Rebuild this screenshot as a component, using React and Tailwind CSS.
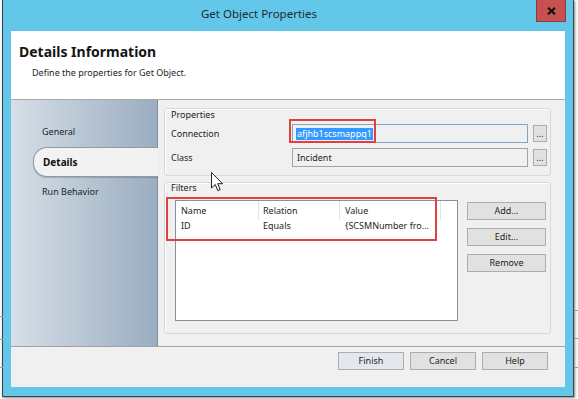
import React from 'react';

const Btn = ({ children, className = '' }) => (
  <div
    className={`flex h-[18px] items-center justify-center border border-[#adadad] bg-[#e1e1e1] text-[9px] text-[#1e1e1e] ${className}`}
  >
    {children}
  </div>
);

const Ellipsis = () => (
  <div className="ml-[5px] flex h-[17px] w-[14px] items-center justify-center border border-[#adadad] bg-[#e1e1e1] text-[9px] leading-none text-[#333]">
    ...
  </div>
);

const Cursor = () => (
  <svg className="absolute left-[211px] top-[172px]" width="13" height="20" viewBox="0 0 13 20">
    <path
      d="M0.5 0.5 L0.5 16 L4.2 12.5 L6.8 18.6 L9.2 17.6 L6.7 11.7 L11.6 11.7 Z"
      fill="#fff"
      stroke="#222"
      strokeWidth="1"
      strokeLinejoin="round"
    />
  </svg>
);

const menu = [
  { label: 'General' },
  { label: 'Details', active: true },
  { label: 'Run Behavior' },
];

export default function App() {
  return (
    <div className="relative h-[399px] w-[578px] overflow-hidden bg-[#f9f9f9] pl-[2px] font-['Noto_Sans',sans-serif] text-[#1e1e1e]">
      {/* bits of the desktop behind the dialog */}
      <div className="absolute left-0 top-[316px] h-px w-[3px] bg-[#9a9a9a]" />
      <div className="absolute left-0 top-[339px] h-px w-[3px] bg-[#9a9a9a]" />
      <div className="absolute left-0 top-[367px] h-px w-[3px] bg-[#9a9a9a]" />
      <div className="absolute right-0 top-[310px] h-px w-[4px] bg-[#9a9a9a]" />
      <div className="absolute right-0 top-[338px] h-px w-[4px] bg-[#9a9a9a]" />
      <div className="absolute right-0 top-[367px] h-px w-[4px] bg-[#9a9a9a]" />

      {/* dialog window */}
      <div className="flex h-[397px] w-[572px] flex-col border-x border-b border-[#3a4348] bg-[#63c7e9] shadow-[1px_1px_2px_rgba(0,0,0,0.45)]">
        {/* title bar */}
        <div className="flex h-[31px] shrink-0">
          <div className="w-[512px] pt-[6px] text-center text-[11.5px] leading-[16px] text-[#1b2b33]">
            Get Object Properties
          </div>
          <div className="ml-[21px] flex h-[22px] w-[30px] items-center justify-center border-x border-b border-[#8d3b3b] bg-[#c75050]">
            <svg width="9" height="8" viewBox="0 0 9 8">
              <path d="M1 0.8 L8 7.2 M8 0.8 L1 7.2" stroke="#111" strokeWidth="2.2" />
            </svg>
          </div>
        </div>

        {/* client area */}
        <div className="mx-[8px] flex h-[356px] flex-col">
          {/* header */}
          <div className="h-[69px] shrink-0 border-b border-[#a9a9a9] bg-white pl-[8px] pt-[12px]">
            <div className="text-[14px] font-bold leading-[18px] text-[#151515]">Details Information</div>
            <div className="pl-[13px] pt-[6px] text-[9px] leading-[12px]">Define the properties for Get Object.</div>
          </div>

          {/* main */}
          <div className="flex h-[246px] shrink-0">
            {/* sidebar */}
            <div className="w-[147px] shrink-0 border-r border-[#7f8d9b] bg-gradient-to-r from-[#d6dfe7] to-[#9badc1] pt-[17px]">
              {menu.map((item) =>
                item.active ? (
                  <div
                    key={item.label}
                    className="relative z-10 -mr-px ml-[22px] flex h-[30px] items-center rounded-l-[14px] border border-r-0 border-[#8f9aa5] bg-[#f2f2f2] pl-[9px] text-[10px] font-bold text-[#111] shadow-[0_1px_1px_rgba(0,0,0,0.18)]"
                  >
                    {item.label}
                  </div>
                ) : (
                  <div key={item.label} className="flex h-[30px] items-center pl-[31px] text-[9px] text-[#222]">
                    {item.label}
                  </div>
                )
              )}
            </div>

            {/* content */}
            <div className="flex flex-1 flex-col bg-[#f0f0f0] pl-[6px] pr-[14px] pt-[8px]">
              {/* Properties group */}
              <div className="rounded-[3px] border border-[#d3d9de] pb-[8px] pl-[6px] shadow-[inset_1px_1px_0_#fff]">
                <div className="text-[9px] leading-[12px]">Properties</div>
                <div className="mt-[3px] flex h-[19px] items-center">
                  <div className="w-[121px] text-[9px]">Connection</div>
                  <div className="flex h-[19px] w-[236px] items-center border border-[#86a3bf] bg-[#f0f0f0] pl-[3px]">
                    <span className="bg-[#3399ff] px-px text-[9px] leading-[12px] text-white">afjhb1scsmappq1</span>
                  </div>
                  <Ellipsis />
                </div>
                <div className="mt-[5px] flex h-[19px] items-center">
                  <div className="w-[121px] text-[9px]">Class</div>
                  <div className="flex h-[19px] w-[236px] items-center border border-[#a3a3a3] bg-[#f0f0f0] pl-[4px] text-[9px]">
                    Incident
                  </div>
                  <Ellipsis />
                </div>
              </div>

              {/* Filters group */}
              <div className="mt-[6px] h-[152px] rounded-[3px] border border-[#d3d9de] shadow-[inset_1px_1px_0_#fff]">
                <div className="pl-[6px] text-[9px] leading-[10px]">Filters</div>
                <div className="mt-[7px] flex">
                  <div className="ml-[10px] h-[121px] w-[283px] border border-[#8c9095] bg-white text-[9px]">
                    <div className="flex h-[19px] items-center">
                      <div className="flex h-full w-[83px] items-center border-r border-[#e3e3e3] pl-[5px]">Name</div>
                      <div className="flex h-full w-[81px] items-center border-r border-[#e3e3e3] pl-[4px]">Relation</div>
                      <div className="flex h-full w-[101px] items-center border-r border-[#e3e3e3] pl-[5px]">Value</div>
                    </div>
                    <div className="flex h-[11px] items-center leading-[11px]">
                      <div className="w-[83px] pl-[5px]">ID</div>
                      <div className="w-[81px] pl-[4px]">Equals</div>
                      <div className="w-[101px] whitespace-nowrap pl-[5px]">{'{SCSMNumber fro...'}</div>
                    </div>
                  </div>
                  <div className="ml-[9px] mt-[2px] flex w-[79px] flex-col gap-[8px]">
                    <Btn>Add...</Btn>
                    <Btn>Edit...</Btn>
                    <Btn>Remove</Btn>
                  </div>
                </div>
              </div>
            </div>
          </div>

          {/* footer */}
          <div className="flex h-[41px] shrink-0 justify-end gap-[6px] border-t border-[#a3a3a3] bg-[#f0f0f0] pr-[17px] pt-[5px]">
            <Btn className="w-[66px] border-[#3c7fb1] bg-[#e3e8ee]">Finish</Btn>
            <Btn className="w-[66px]">Cancel</Btn>
            <Btn className="w-[66px]">Help</Btn>
          </div>
        </div>
      </div>

      {/* red annotation boxes */}
      <div className="absolute left-[289px] top-[119px] h-[24px] w-[87px] border-[2.5px] border-[#e0403f]" />
      <div className="absolute left-[166px] top-[197px] h-[44px] w-[271px] border-[2.5px] border-[#e0403f]" />

      <Cursor />
    </div>
  );
}
